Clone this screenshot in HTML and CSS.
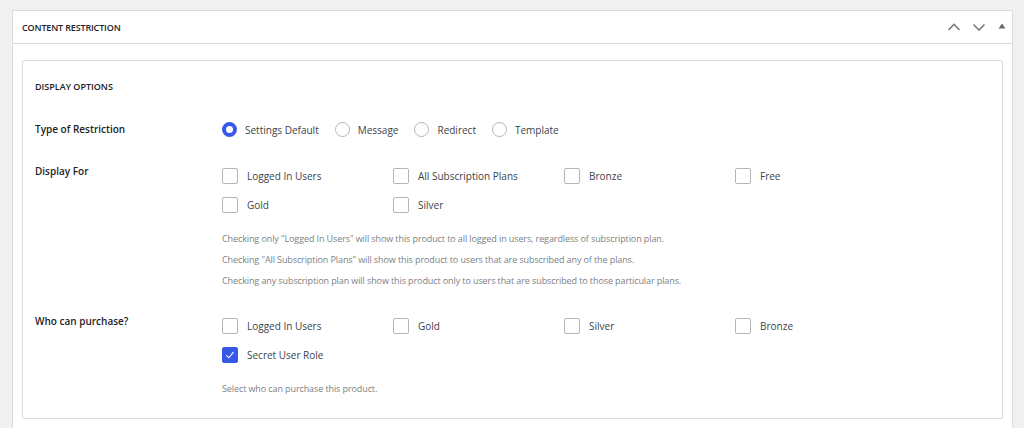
FILE: index.html
```html
<!DOCTYPE html>
<html lang="en">

<head>
    <meta charset="UTF-8">
    <meta name="viewport" content="width=device-width, initial-scale=1.0">
    <title>Edit Product - Content Restriction</title>
    <link rel="stylesheet" href="styles.css">
</head>

<body>
    <!-- Content restriction metabox -->
    <div class="postbox">
        <div class="postbox-header">
            <h2>Content Restriction</h2>
            <div class="handle-actions">
                <button class="handle-btn" aria-label="Move up">
                    <svg width="14" height="14" viewBox="0 0 14 14"><path d="M1.5 10 L7 4.5 L12.5 10" fill="none" stroke="#787c82" stroke-width="1.6"/></svg>
                </button>
                <button class="handle-btn" aria-label="Move down">
                    <svg width="14" height="14" viewBox="0 0 14 14"><path d="M1.5 4.5 L7 10 L12.5 4.5" fill="none" stroke="#787c82" stroke-width="1.6"/></svg>
                </button>
                <button class="handle-btn small" aria-label="Toggle panel">
                    <svg width="8" height="8" viewBox="0 0 8 8"><path d="M0.5 6.5 L4 1.5 L7.5 6.5 Z" fill="#646970"/></svg>
                </button>
            </div>
        </div>

        <div class="inside">
            <div class="options-box">
                <h3>Display Options</h3>

                <!-- Type of restriction -->
                <div class="field field-type">
                    <label class="field-label">Type of Restriction</label>
                    <div class="radios">
                        <label class="opt"><input type="radio" name="type" checked> Settings Default</label>
                        <label class="opt"><input type="radio" name="type"> Message</label>
                        <label class="opt"><input type="radio" name="type"> Redirect</label>
                        <label class="opt"><input type="radio" name="type"> Template</label>
                    </div>
                </div>

                <!-- Display for -->
                <div class="field">
                    <label class="field-label">Display For</label>
                    <div>
                        <div class="checks">
                            <label class="opt"><input type="checkbox"> Logged In Users</label>
                            <label class="opt"><input type="checkbox"> All Subscription Plans</label>
                            <label class="opt"><input type="checkbox"> Bronze</label>
                            <label class="opt"><input type="checkbox"> Free</label>
                            <label class="opt"><input type="checkbox"> Gold</label>
                            <label class="opt"><input type="checkbox"> Silver</label>
                        </div>
                        <p class="description">Checking only "Logged In Users" will show this product to all logged in users, regardless of subscription plan.<br>
                            Checking "All Subscription Plans" will show this product to users that are subscribed any of the plans.<br>
                            Checking any subscription plan will show this product only to users that are subscribed to those particular plans.</p>
                    </div>
                </div>

                <!-- Who can purchase -->
                <div class="field">
                    <label class="field-label">Who can purchase?</label>
                    <div>
                        <div class="checks">
                            <label class="opt"><input type="checkbox"> Logged In Users</label>
                            <label class="opt"><input type="checkbox"> Gold</label>
                            <label class="opt"><input type="checkbox"> Silver</label>
                            <label class="opt"><input type="checkbox"> Bronze</label>
                            <label class="opt"><input type="checkbox" checked> Secret User Role</label>
                        </div>
                        <p class="description">Select who can purchase this product.</p>
                    </div>
                </div>
            </div>
        </div>
    </div>
</body>

</html>
```

FILE: styles.css
```css
* {
    box-sizing: border-box;
    margin: 0;
    padding: 0;
}

body {
    font-family: "Open Sans", "Noto Sans", sans-serif;
    font-size: 10px;
    color: #3c434a;
    background-color: #f0f0f1;
    padding: 10px 11px 0 12px;
}

.postbox {
    background-color: #fff;
    border: 1px solid #dcdcde;
    border-bottom: none;
    height: 420px;
}

.postbox-header {
    display: flex;
    align-items: center;
    justify-content: space-between;
    height: 33px;
    border-bottom: 1px solid #dcdcde;
    padding: 0 6px 0 9px;
}

.postbox-header h2 {
    font-size: 9px;
    font-weight: 600;
    text-transform: uppercase;
    color: #1d2327;
    letter-spacing: -0.15px;
    padding-top: 1px;
}

.handle-actions {
    display: flex;
    align-items: center;
    gap: 11px;
}

.handle-btn {
    background: none;
    border: none;
    display: flex;
    align-items: center;
    cursor: pointer;
}

.handle-btn.small {
    margin-left: 1px;
    margin-top: -2px;
}

.inside {
    padding: 16px 9px 0 9px;
}

.options-box {
    border: 1px solid #dcdcde;
    border-radius: 2px;
    padding: 18px 12px 19px 12px;
}

.options-box h3 {
    font-size: 9px;
    font-weight: 600;
    text-transform: uppercase;
    color: #1d2327;
    line-height: 16px;
    margin-bottom: 20px;
}

.field {
    display: grid;
    grid-template-columns: 187px 1fr;
    margin-bottom: 20px;
}

.field:last-child {
    margin-bottom: 0;
}

.field-type {
    margin-bottom: 17px;
}

.field-label {
    font-weight: 600;
    font-size: 10px;
    color: #1d2327;
    line-height: 20px;
}

.field-type .field-label {
    line-height: 29px;
}

.radios {
    display: flex;
    gap: 16px;
}

.checks {
    display: grid;
    grid-template-columns: repeat(4, 171px);
}

.opt {
    display: flex;
    align-items: center;
    gap: 8px;
    height: 29px;
    font-size: 10px;
    color: #3c434a;
    white-space: nowrap;
}

.checks .opt {
    gap: 9px;
}

input[type="radio"],
input[type="checkbox"] {
    appearance: none;
    -webkit-appearance: none;
    width: 16px;
    height: 16px;
    border: 1px solid #b5b5b8;
    background: #fff;
    position: relative;
    flex-shrink: 0;
}

input[type="radio"] {
    width: 15px;
    height: 15px;
    border-radius: 50%;
}

input[type="radio"]:checked {
    border: 4px solid #3858e9;
}

input[type="checkbox"] {
    border-radius: 2px;
}

input[type="checkbox"]:checked {
    background: #3858e9;
    border-color: #3858e9;
}

input[type="checkbox"]:checked::before {
    content: "";
    position: absolute;
    left: 5px;
    top: 2px;
    width: 3px;
    height: 7px;
    border: solid #fff;
    border-width: 0 1.3px 1.3px 0;
    transform: rotate(40deg);
}

.description {
    margin-top: 9px;
    font-size: 9px;
    line-height: 21px;
    letter-spacing: -0.1px;
    color: #7c7f84;
}
```
